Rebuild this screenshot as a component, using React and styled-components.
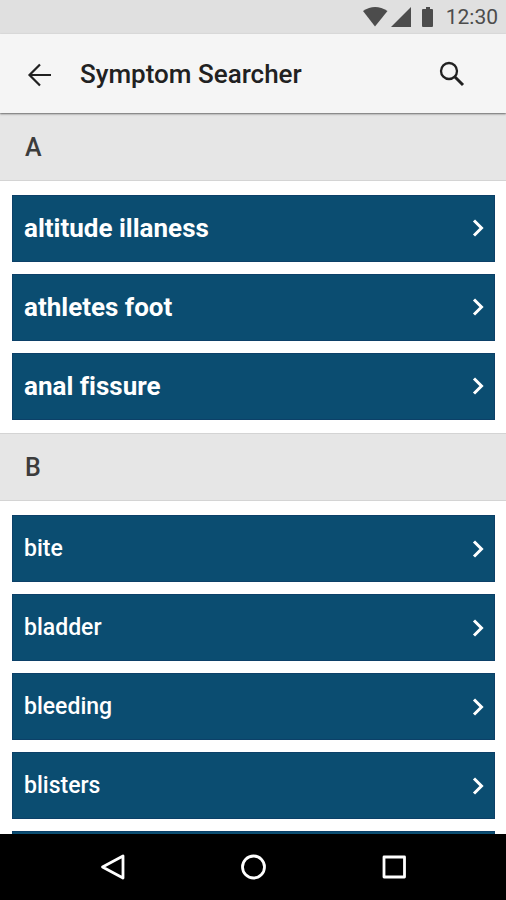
import styled, { createGlobalStyle } from "styled-components";

const GlobalStyle = createGlobalStyle`
  * {
    box-sizing: border-box;
  }
  body {
    margin: 0;
    background-color: #fff;
    font-family: Roboto, "Liberation Sans", sans-serif;
    font-variant-ligatures: none;
  }
`;

const Container = styled.div`
  height: 100vh;
  display: flex;
  flex-direction: column;
  overflow: hidden;
`;

const StatusBar = styled.div`
  flex: none;
  height: 34px;
  padding: 0 8px 0 0;
  display: flex;
  align-items: center;
  justify-content: flex-end;
  background-color: #e0e0e0;
  color: #4c4c4c;
`;

const StatusIcons = styled.svg`
  width: 76px;
  height: 24px;
  margin-right: 8px;
  fill: currentColor;
`;

const Clock = styled.time`
  font-size: 21px;
  line-height: 34px;
`;

const Header = styled.header`
  flex: none;
  height: 79px;
  padding: 0 38px 0 24px;
  display: flex;
  align-items: center;
  background-color: #f5f5f5;
  color: #212121;
  box-shadow: 0 1px 2px rgba(0, 0, 0, 0.5);
  z-index: 1;
`;

const Title = styled.h1`
  flex: 1;
  margin: 0 0 0 24px;
  font-size: 26px;
  font-weight: 500;
  line-height: 32px;
`;

const IconButton = styled.button`
  width: 32px;
  height: 32px;
  padding: 0;
  border: none;
  display: flex;
  align-items: center;
  justify-content: center;
  background: none;
  color: inherit;
  cursor: pointer;
`;

const Content = styled.main`
  flex: 1;
  min-height: 0;
  overflow-y: auto;
  scrollbar-width: none;
`;

const Letter = styled.h2`
  height: 68px;
  margin: 0;
  padding: 0 25px;
  border-top: 1px solid #d4d4d4;
  border-bottom: 1px solid #d4d4d4;
  background-color: #e6e6e6;
  color: #3c3c3c;
  font-size: 25px;
  font-weight: 500;
  line-height: 68px;
`;

const List = styled.ul`
  margin: 0;
  padding: 14px 11px 13px 12px;
  display: flex;
  flex-direction: column;
  gap: 12px;
  list-style: none;
`;

const Row = styled.button`
  width: 100%;
  height: 67px;
  padding: ${(props) => (props.$large ? "0 4px 2px 11px" : "0 4px 0 11px")};
  border: 1px solid #0c4068;
  display: flex;
  align-items: center;
  justify-content: space-between;
  background-color: #0b4d71;
  color: #fff;
  font-family: inherit;
  font-size: ${(props) => (props.$large ? "26px" : "23px")};
  font-weight: ${(props) => (props.$large ? 700 : 500)};
  font-variant-ligatures: inherit;
  line-height: 32px;
  text-align: left;
  cursor: pointer;
`;

const NavBar = styled.nav`
  flex: none;
  height: 66px;
  padding: 0 42px;
  display: flex;
  align-items: center;
  justify-content: space-around;
  background-color: #000;
  color: #fff;
`;

const sections = [
  {
    letter: "A",
    large: true,
    symptoms: ["altitude illaness", "athletes foot", "anal fissure"],
  },
  {
    letter: "B",
    large: false,
    symptoms: ["bite", "bladder", "bleeding", "blisters", ""],
  },
];

const Chevron = () => (
  <svg width="24" height="24" viewBox="0 0 24 24" fill="none" stroke="currentColor" strokeWidth="3">
    <path d="M8 4.5 15.5 12 8 19.5" />
  </svg>
);

const App = () => {
  return (
    <Container>
      <GlobalStyle />
      <StatusBar>
        <StatusIcons viewBox="0 0 76 24" aria-hidden="true">
          <path d="M1 6Q13 -2 25.5 6L13 21.5Z" />
          <path d="M29 22 49 2V22Z" />
          <path d="M64 2H68V4H70Q71 4 71 5V21Q71 22 70 22H61Q60 22 60 21V5Q60 4 61 4H64Z" />
        </StatusIcons>
        <Clock>12:30</Clock>
      </StatusBar>
      <Header>
        <IconButton aria-label="Back">
          <svg width="32" height="32" viewBox="0 0 32 32" fill="none" stroke="currentColor" strokeWidth="2.2">
            <path d="M27 17H6M16 6.5 5.5 17 16 27.5" />
          </svg>
        </IconButton>
        <Title>Symptom Searcher</Title>
        <IconButton aria-label="Search">
          <svg width="32" height="32" viewBox="0 0 32 32" fill="none" stroke="currentColor" strokeWidth="2.3">
            <circle cx="13" cy="13" r="8" />
            <path d="M19 19 27 27" strokeWidth="3" />
          </svg>
        </IconButton>
      </Header>
      <Content>
        {sections.map((section) => (
          <section key={section.letter}>
            <Letter>{section.letter}</Letter>
            <List>
              {section.symptoms.map((symptom) => (
                <li key={symptom}>
                  <Row $large={section.large}>
                    <span>{symptom}</span>
                    <Chevron />
                  </Row>
                </li>
              ))}
            </List>
          </section>
        ))}
      </Content>
      <NavBar>
        <IconButton aria-label="System back">
          <svg width="32" height="32" viewBox="0 0 32 32" fill="none" stroke="currentColor" strokeWidth="2.8" strokeLinejoin="round">
            <path d="M27 5V27L6.5 16Z" />
          </svg>
        </IconButton>
        <IconButton aria-label="Home">
          <svg width="32" height="32" viewBox="0 0 32 32" fill="none" stroke="currentColor" strokeWidth="2.8">
            <circle cx="16.5" cy="16" r="11" />
          </svg>
        </IconButton>
        <IconButton aria-label="Overview">
          <svg width="32" height="32" viewBox="0 0 32 32" fill="none" stroke="currentColor" strokeWidth="2.8" strokeLinejoin="round">
            <rect x="6" y="6" width="20.5" height="20" />
          </svg>
        </IconButton>
      </NavBar>
    </Container>
  );
};

export default App;
